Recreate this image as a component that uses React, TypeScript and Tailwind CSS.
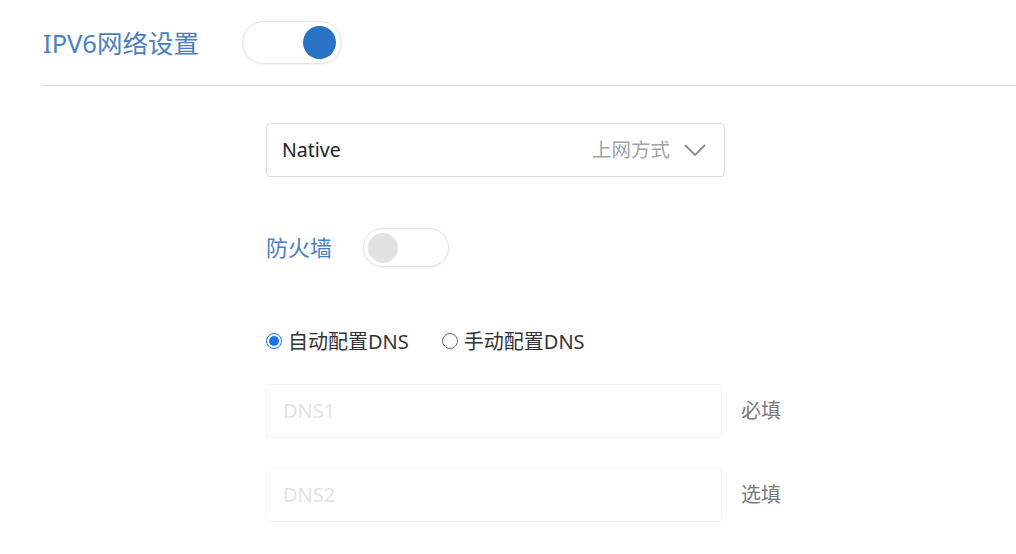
import { useState } from "react";

const font = { fontFamily: '"Noto Sans", "Noto Sans CJK SC", sans-serif' };

function Toggle({ on, big }: { on: boolean; big?: boolean }) {
    return (
        <div
            className={
                big
                    ? "flex h-[43px] w-[100px] items-center rounded-full border border-[#e3e3e3] bg-white px-[5px] shadow-[0_1px_2px_rgba(0,0,0,0.06)]"
                    : "flex h-[39px] w-[86px] items-center rounded-full border border-[#e3e3e3] bg-white px-[4px] shadow-[0_1px_2px_rgba(0,0,0,0.06)]"
            }
        >
            <div
                className={
                    on
                        ? "ml-auto h-[33px] w-[33px] rounded-full bg-[#2a72c4]"
                        : "h-[30px] w-[30px] rounded-full bg-[#e2e2e2]"
                }
            />
        </div>
    );
}

function Radio({ checked, label }: { checked: boolean; label: string }) {
    return (
        <label className="flex items-center gap-[6px] text-[20px] text-[#333]">
            <span
                className={
                    checked
                        ? "flex h-[16px] w-[16px] items-center justify-center rounded-full border border-[#1a73e8] bg-white"
                        : "flex h-[16px] w-[16px] items-center justify-center rounded-full border border-[#666] bg-white"
                }
            >
                {checked && <span className="h-[10px] w-[10px] rounded-full bg-[#1a73e8]" />}
            </span>
            <span className="relative top-[1px]">{label}</span>
        </label>
    );
}

export default function App() {
    const [auto] = useState(true);

    return (
        <div className="h-[554px] w-[1016px] overflow-hidden bg-white pl-[43px]" style={font}>
            <div className="flex h-[86px] items-center border-b border-[#dcdcdc] pb-[1px]">
                <span className="relative top-[1px] text-[25.5px] text-[#4a7fc1]">IPV6网络设置</span>
                <div className="ml-[43px]">
                    <Toggle on big />
                </div>
            </div>

            <div className="ml-[223px] flex flex-col">
                <div className="mt-[37px] flex h-[54px] w-[459px] items-center rounded-[4px] border border-[#dcdcdc] pl-[15px] pr-[18px]">
                    <span className="text-[19.5px] text-[#222]">Native</span>
                    <span className="ml-auto text-[19.5px] text-[#a3a3a3]">上网方式</span>
                    <svg className="ml-[14px]" width="22" height="12" viewBox="0 0 22 12" fill="none">
                        <path d="M1 1l10 10 10-10" stroke="#8a8a8a" strokeWidth="1.8" />
                    </svg>
                </div>

                <div className="mt-[51px] flex items-center">
                    <span className="text-[22px] text-[#4a7fc1]">防火墙</span>
                    <div className="ml-[31px]">
                        <Toggle on={false} />
                    </div>
                </div>

                <div className="mt-[59px] flex items-center gap-[33px]">
                    <Radio checked={auto} label="自动配置DNS" />
                    <Radio checked={!auto} label="手动配置DNS" />
                </div>

                <div className="mt-[28px] flex items-center">
                    <div className="flex h-[54px] w-[456px] items-center rounded-[4px] border border-[#f4f4f4] pl-[16px] text-[20px] text-[#e2e2e2]">
                        DNS1
                    </div>
                    <span className="ml-[19px] text-[20px] text-[#7a7a7a]">必填</span>
                </div>

                <div className="mt-[30px] flex items-center">
                    <div className="flex h-[54px] w-[456px] items-center rounded-[4px] border border-[#f4f4f4] pl-[16px] text-[20px] text-[#e2e2e2]">
                        DNS2
                    </div>
                    <span className="ml-[19px] text-[20px] text-[#7a7a7a]">选填</span>
                </div>
            </div>
        </div>
    );
}
